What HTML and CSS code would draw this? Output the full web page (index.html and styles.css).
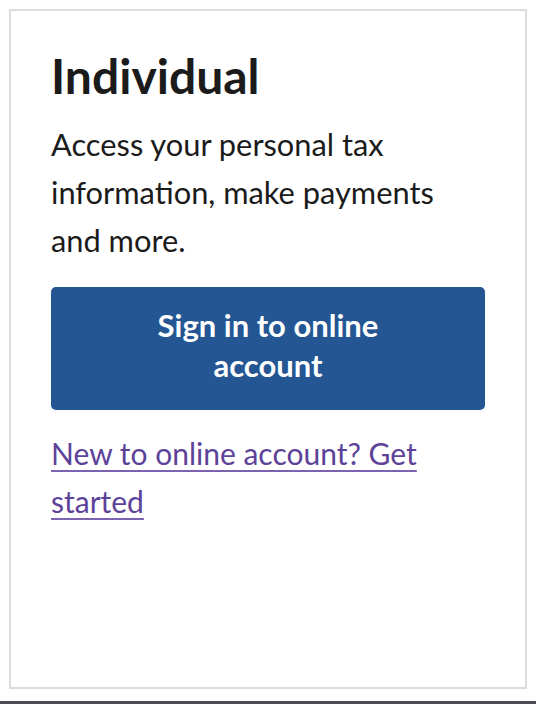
FILE: index.html
```html
<!DOCTYPE html>
<html lang="en">
<head>
<meta charset="utf-8">
<title>Individual</title>
<link rel="stylesheet" href="styles.css">
</head>
<body>
<div class="page">
  <section class="card">
    <h2 class="card-title">Individual</h2>
    <p class="card-text">Access your personal tax information, make payments and more.</p>
    <a class="btn" href="#">Sign in to online account</a>
    <p class="card-link"><a href="#">New to online account? Get started</a></p>
  </section>
  <div class="bottom-bar"></div>
</div>
</body>
</html>
```

FILE: styles.css
```css
html, body {
  margin: 0;
  padding: 0;
  background: #ffffff;
}

body {
  font-family: Lato, "Noto Sans", sans-serif;
  color: #1b1b1b;
}

.page {
  padding-top: 9px;
}

.card {
  box-sizing: border-box;
  margin-left: 9px;
  width: 518px;
  height: 680px;
  border: 2px solid #dcdcdc;
  padding: 37px 40px 0 40px;
  display: flex;
  flex-direction: column;
  align-items: stretch;
}

.card-title {
  margin: 0;
  font-size: 48px;
  line-height: 56px;
  font-weight: 700;
  color: #1b1b1b;
}

.card-text {
  margin: 17px 0 0 0;
  font-size: 30.8px;
  line-height: 48px;
  font-weight: 400;
}

.btn {
  display: block;
  margin-top: 22px;
  padding: 18px 64px 25px 64px;
  background: #245694;
  color: #ffffff;
  border-radius: 5px;
  text-align: center;
  text-decoration: none;
  font-size: 31px;
  line-height: 40px;
  font-weight: 700;
}

.card-link {
  margin: 19px 0 0 0;
  font-size: 30px;
  line-height: 48px;
}

.card-link a {
  color: #5c4399;
  text-decoration: underline;
  text-decoration-color: #7a63b0;
  text-decoration-thickness: 2px;
  text-underline-offset: 5px;
}

.bottom-bar {
  margin-top: 12px;
  height: 4px;
  background: #4a4d55;
}
```
